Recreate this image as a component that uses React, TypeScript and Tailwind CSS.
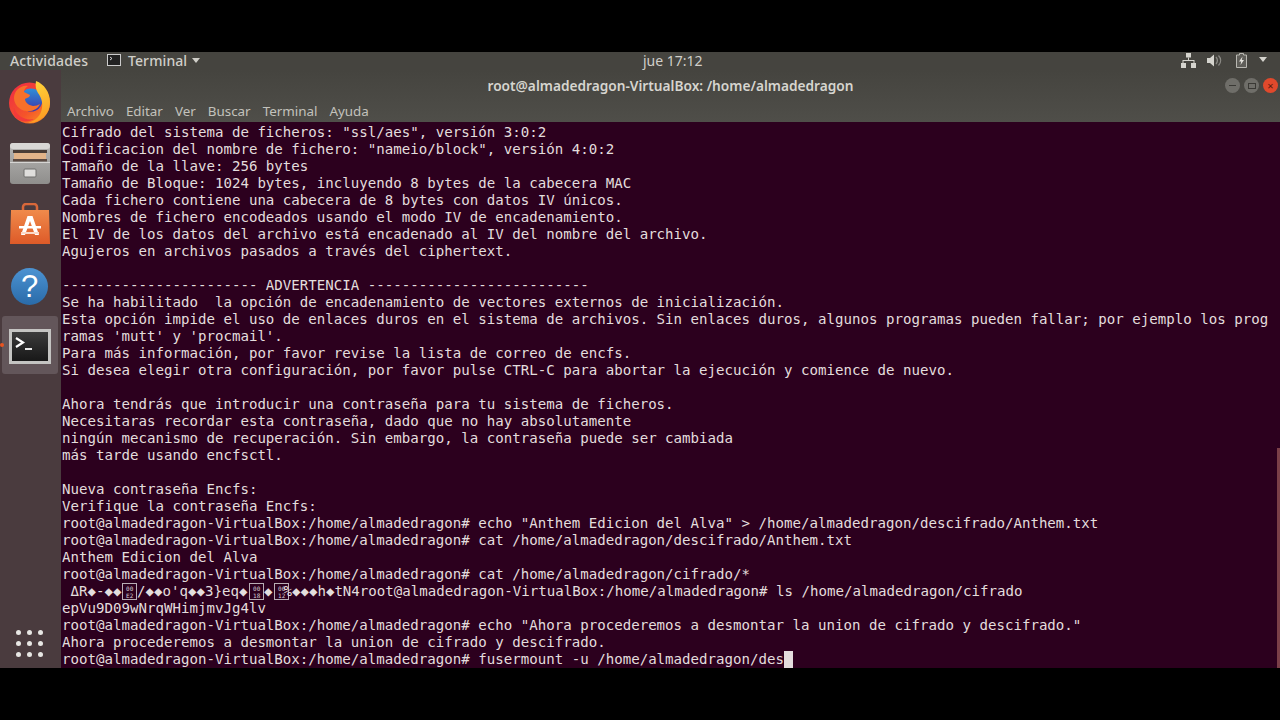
const USER = "root@almadedragon-VirtualBox:/home/almadedragon#";

const before = [
  'Cifrado del sistema de ficheros: "ssl/aes", versión 3:0:2',
  'Codificacion del nombre de fichero: "nameio/block", versión 4:0:2',
  "Tamaño de la llave: 256 bytes",
  "Tamaño de Bloque: 1024 bytes, incluyendo 8 bytes de la cabecera MAC",
  "Cada fichero contiene una cabecera de 8 bytes con datos IV únicos.",
  "Nombres de fichero encodeados usando el modo IV de encadenamiento.",
  "El IV de los datos del archivo está encadenado al IV del nombre del archivo.",
  "Agujeros en archivos pasados a través del ciphertext.",
  "",
  "----------------------- ADVERTENCIA --------------------------",
  "Se ha habilitado  la opción de encadenamiento de vectores externos de inicialización.",
  "Esta opción impide el uso de enlaces duros en el sistema de archivos. Sin enlaces duros, algunos programas pueden fallar; por ejemplo los prog",
  "ramas 'mutt' y 'procmail'.",
  "Para más información, por favor revise la lista de correo de encfs.",
  "Si desea elegir otra configuración, por favor pulse CTRL-C para abortar la ejecución y comience de nuevo.",
  "",
  "Ahora tendrás que introducir una contraseña para tu sistema de ficheros.",
  "Necesitaras recordar esta contraseña, dado que no hay absolutamente",
  "ningún mecanismo de recuperación. Sin embargo, la contraseña puede ser cambiada",
  "más tarde usando encfsctl.",
  "",
  "Nueva contraseña Encfs:",
  "Verifique la contraseña Encfs:",
  `${USER} echo "Anthem Edicion del Alva" > /home/almadedragon/descifrado/Anthem.txt`,
  `${USER} cat /home/almadedragon/descifrado/Anthem.txt`,
  "Anthem Edicion del Alva",
  `${USER} cat /home/almadedragon/cifrado/*`,
];

const after = [
  "epVu9D09wNrqWHimjmvJg4lv",
  `${USER} echo "Ahora procederemos a desmontar la union de cifrado y descifrado."`,
  "Ahora procederemos a desmontar la union de cifrado y descifrado.",
];

// missing-glyph box the terminal prints for control bytes
function Tofu({ code, className }: { code: string; className?: string }) {
  return (
    <span className={`inline-flex h-[17px] w-[14.5px] flex-col items-center justify-center border border-[#b9aeb5] align-top text-[6px] leading-[7px] text-[#d5ccd2] ${className ?? ""}`}>
      <span>00</span>
      <span>{code}</span>
    </span>
  );
}

function Row({ children }: { children?: React.ReactNode }) {
  return <div className="h-[17px] whitespace-pre leading-[17px]">{children}</div>;
}

function Firefox() {
  return (
    <svg viewBox="0 0 42 44" className="h-[44px] w-[42px]">
      <defs>
        <linearGradient id="ffDisc" x1="0.1" y1="0.2" x2="0.8" y2="1">
          <stop offset="0" stopColor="#f0323f" />
          <stop offset="0.6" stopColor="#f4542a" />
          <stop offset="1" stopColor="#fb8a23" />
        </linearGradient>
        <linearGradient id="ffTail" x1="0.3" y1="0" x2="0.5" y2="1">
          <stop offset="0" stopColor="#ffd43a" />
          <stop offset="1" stopColor="#fb9a22" />
        </linearGradient>
        <linearGradient id="ffGlobe" x1="0.5" y1="0" x2="0.5" y2="1">
          <stop offset="0" stopColor="#2e8fd8" />
          <stop offset="1" stopColor="#3c34a8" />
        </linearGradient>
      </defs>
      <circle cx="20.5" cy="23" r="20.5" fill="url(#ffDisc)" />
      <circle cx="22" cy="20" r="11.5" fill="url(#ffGlobe)" />
      <path d="M27 1c8 3 14 11 14 21 0 7-3 13-9 17-4 3-9 4-13 4 7-2 13-7 14-15 1-6-1-11-4-15-2-3-3-7-2-12z" fill="url(#ffTail)" />
      <path d="M8 10c3-3 7-5 11-4-3 2-4 4-4 6 2 1 4 2 6 3 0 2-3 3-5 4 0 3 3 6 8 7 3 0 5-1 7-2-2 5-8 8-14 7-7-1-12-7-12-13 0-3 1-6 3-8z" fill="#f7702a" />
      <path d="M5 28c3 8 11 13 20 11-6 4-14 3-19-2-1-2-2-6-1-9z" fill="#f23a3a" />
    </svg>
  );
}

function Files() {
  return (
    <svg viewBox="0 0 40 41" className="h-[41px] w-[40px]">
      <defs>
        <linearGradient id="filesBody" x1="0" y1="0" x2="0" y2="1">
          <stop offset="0" stopColor="#b8b7b5" />
          <stop offset="1" stopColor="#8f8e8c" />
        </linearGradient>
      </defs>
      <rect width="40" height="41" rx="3" fill="url(#filesBody)" />
      <rect width="40" height="6" rx="3" fill="#d8d7d5" />
      <rect x="3" y="7" width="34" height="3" fill="#4a3d36" />
      <rect x="4" y="10" width="32" height="6" fill="#e2b489" />
      <rect x="3" y="16" width="34" height="2.5" fill="#5b4a42" />
      <rect y="19" width="40" height="1" fill="#d6d5d3" />
      <rect x="14" y="26" width="12" height="8" rx="1" fill="#dfdedc" stroke="#6f6e6c" />
    </svg>
  );
}

function Software() {
  return (
    <svg viewBox="0 0 40 41" className="h-[41px] w-[40px]">
      <defs>
        <linearGradient id="bag" x1="0" y1="0" x2="0" y2="1">
          <stop offset="0" stopColor="#f08a4b" />
          <stop offset="1" stopColor="#dd5a28" />
        </linearGradient>
      </defs>
      <path d="M13 8V4a3 3 0 0 1 3-3h8a3 3 0 0 1 3 3v4" fill="none" stroke="#d9683a" strokeWidth="2.5" />
      <path d="M1 7h38l1 34H0z" fill="url(#bag)" />
      <path d="M17.5 13h5l6.5 19h-4l-5-14-5 14h-4z" fill="#fff" />
      <rect x="9" y="23" width="22" height="2.5" fill="#fff" />
      <rect x="11" y="29" width="18" height="2" fill="#fbd9c7" />
    </svg>
  );
}

function Help() {
  return (
    <div className="flex size-[37px] items-center justify-center rounded-full bg-gradient-to-b from-[#4c93d2] to-[#2a6ba9] font-['Liberation_Sans',sans-serif] text-[31px] leading-none text-white">
      ?
    </div>
  );
}

function DockTerminal() {
  return (
    <div className="h-[35px] w-[42px] border-[3px] border-[#c4c4c2] bg-gradient-to-b from-[#3c3c3c] to-[#181818]">
      <svg viewBox="0 0 36 29" className="h-[29px] w-[36px]">
        <path d="M4 6l7 4.5-7 4.5" fill="none" stroke="#fff" strokeWidth="2.2" />
        <path d="M13 17h7" stroke="#e8e8e8" strokeWidth="2" />
      </svg>
    </div>
  );
}

export default function App() {
  return (
    <div className="flex h-[720px] w-[1280px] flex-col overflow-hidden bg-black font-['Noto_Sans',sans-serif]">
      <div className="h-[52px] shrink-0" />

      {/* Top bar */}
      <div className="relative flex h-[18px] shrink-0 items-center bg-[#45443f] pb-[2px] text-[14px] font-medium text-[#d0cfc9]">
        <span className="ml-[10px] w-[97px] tracking-[0.15px]">Actividades</span>
        <svg viewBox="0 0 14 12" className="h-[12px] w-[14px]">
          <rect x="0.5" y="0.5" width="13" height="11" fill="#222" stroke="#ccc" />
          <path d="M3 3l2 1.5L3 6" fill="none" stroke="#fff" strokeWidth="0.8" />
        </svg>
        <span className="ml-[7px] tracking-[0.1px]">Terminal</span>
        <span className="ml-[5px] h-0 w-0 border-x-[4px] border-t-[5px] border-x-transparent border-t-[#d0cfc9]" />
        <span className="absolute left-[643px] font-normal">jue 17:12</span>
        <div className="absolute left-[1181px] top-[1px] flex items-start">
          <svg viewBox="0 0 15 15" className="h-[15px] w-[15px]" fill="#d5d4ce">
            <rect x="5" y="0" width="5" height="4.5" />
            <rect x="0" y="10" width="5" height="5" />
            <rect x="10" y="10" width="5" height="5" />
            <path d="M7 4.5h1V7h5.5v3h-1V8H2.5v2h-1V7H7z" />
          </svg>
          <svg viewBox="0 0 15 15" className="ml-[11px] h-[15px] w-[15px]" fill="#d5d4ce">
            <path d="M0 5h3l4-3.5v12L3 10H0z" />
            <path d="M9 4c1.6 2 1.6 5 0 7M11.5 2.5c2.8 3 2.8 7 0 10" fill="none" stroke="#8b8a85" strokeWidth="1.3" />
          </svg>
          <svg viewBox="0 0 11 15" className="ml-[14px] h-[15px] w-[11px]">
            <path d="M3.5 0.5h4v1.5h3v12.5H.5V2h3z" fill="#5f5e59" stroke="#b9b8b2" />
            <path d="M6.5 3.5L3 8.5h2.2L4.5 12 8 7H5.8z" fill="#e4e3dd" />
          </svg>
          <span className="ml-[12px] mt-[4px] h-0 w-0 border-x-[4px] border-t-[5px] border-x-transparent border-t-[#d5d4ce]" />
        </div>
      </div>

      <div className="flex min-h-0 flex-1">
        {/* Dock */}
        <aside className="flex h-[598px] w-[61px] shrink-0 flex-col items-center bg-[#4a3b3e] pr-[2px]">
          <div className="mt-[10px]"><Firefox /></div>
          <div className="mt-[19px]"><Files /></div>
          <div className="mt-[19px]"><Software /></div>
          <div className="mt-[24px]"><Help /></div>
          <div className="relative mt-[11px] flex h-[58px] w-[56px] items-center justify-center rounded-[3px] bg-[#63565a] pt-[3px]">
            <DockTerminal />
            <span className="absolute -left-[2px] top-[27px] size-[4px] rounded-full bg-[#e95420]" />
          </div>
          <div className="mb-[11px] mt-auto grid grid-cols-3 gap-[6px]">
            {Array.from({ length: 9 }).map((_, i) => (
              <span key={i} className="size-[5px] rounded-full bg-[#e8e7e4]" />
            ))}
          </div>
        </aside>

        {/* Terminal window */}
        <main className="flex h-[598px] min-w-0 flex-1 flex-col">
          <header className="relative h-[52px] shrink-0 bg-gradient-to-b from-[#45443f] to-[#4f4e49]">
            <div className="pt-[7px] text-center text-[13.7px] font-semibold leading-[18px] text-[#d6d5cf]">
              root@almadedragon-VirtualBox: /home/almadedragon
            </div>
            <div className="absolute left-[6px] top-[32px] flex gap-[12px] text-[13.4px] leading-[18px] text-[#c3c2bc]">
              <span>Archivo</span>
              <span>Editar</span>
              <span>Ver</span>
              <span>Buscar</span>
              <span>Terminal</span>
              <span>Ayuda</span>
            </div>
            <div className="absolute right-[2px] top-[8px] flex gap-[4px]">
              <span className="flex size-[15px] items-center justify-center rounded-full bg-[#6f6e69]">
                <span className="h-[1.5px] w-[7px] bg-[#3a3935]" />
              </span>
              <span className="flex size-[15px] items-center justify-center rounded-full bg-[#6f6e69]">
                <span className="h-[6px] w-[8px] border border-[#3a3935]" />
              </span>
              <span className="flex size-[15px] items-center justify-center rounded-full bg-[#e0492c] text-[11px] leading-none text-[#5a1a0c]">
                ×
              </span>
            </div>
          </header>

          <div className="relative min-h-0 flex-1 bg-[#2c001e] pl-px pt-[2px] font-['DejaVu_Sans_Mono',monospace] text-[14.11px] text-[#e3dddd]">
            {before.map((line, i) => (
              <Row key={i}>{line}</Row>
            ))}
            <Row>
              {" ΔR◆-◆◆"}
              <Tofu code="E2" className="ml-[1px]" />
              {"/◆◆o'q◆◆3}eq◆"}
              <Tofu code="18" className="ml-[2px]" />
              {"◆"}
              <Tofu code="12" className="ml-[2px]" />
              <span className="-ml-[5.5px]">%</span>
              {`◆◆◆h◆tN4${USER} ls /home/almadedragon/cifrado`}
            </Row>
            {after.map((line, i) => (
              <Row key={i}>{line}</Row>
            ))}
            <Row>
              {`${USER} fusermount -u /home/almadedragon/des`}
              <span className="inline-block h-[17px] w-[8.49px] bg-[#e3dddd] align-top" />
            </Row>
            {/* scrollbar */}
            <span className="absolute bottom-0 right-0 top-[326px] w-[3px] bg-[#7a3f48]" />
          </div>
        </main>
      </div>
    </div>
  );
}
